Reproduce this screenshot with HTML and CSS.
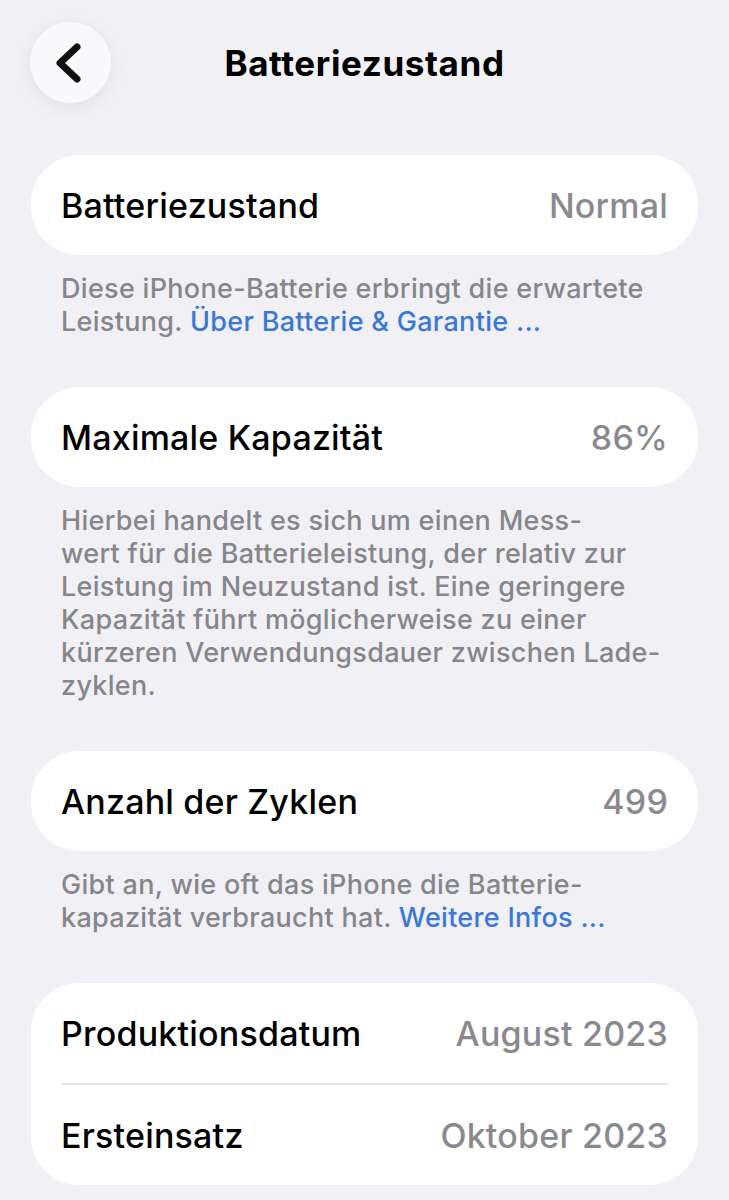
FILE: index.html
```html
<!DOCTYPE html>
<html lang="de">
<head>
  <meta charset="UTF-8">
  <title>Batteriezustand</title>
  <link rel="stylesheet" href="styles.css">
</head>
<body>
  <header class="nav">
    <button class="back" aria-label="Zurück">
      <svg width="40" height="40" viewBox="0 0 40 40">
        <path d="M27 4 L10 20 L27 36" fill="none" stroke="#111" stroke-width="7" stroke-linecap="round" stroke-linejoin="round"/>
      </svg>
    </button>
    <h1 class="title">Batteriezustand</h1>
  </header>

  <main class="content">
    <section class="group">
      <div class="card">
        <div class="row"><span class="label">Batteriezustand</span><span class="value">Normal</span></div>
      </div>
      <p class="footer">Diese iPhone-Batterie erbringt die erwartete<br>Leistung. <a href="#">Über Batterie &amp; Garantie ...</a></p>
    </section>

    <section class="group">
      <div class="card">
        <div class="row"><span class="label">Maximale Kapazität</span><span class="value">86%</span></div>
      </div>
      <p class="footer">Hierbei handelt es sich um einen Mess-<br>wert für die Batterieleistung, der relativ zur<br>Leistung im Neuzustand ist. Eine geringere<br>Kapazität führt möglicherweise zu einer<br>kürzeren Verwendungsdauer zwischen Lade-<br>zyklen.</p>
    </section>

    <section class="group">
      <div class="card">
        <div class="row"><span class="label">Anzahl der Zyklen</span><span class="value">499</span></div>
      </div>
      <p class="footer">Gibt an, wie oft das iPhone die Batterie-<br>kapazität verbraucht hat. <a href="#">Weitere Infos ...</a></p>
    </section>

    <section class="group">
      <div class="card">
        <div class="row"><span class="label">Produktionsdatum</span><span class="value">August 2023</span></div>
        <div class="row"><span class="label">Ersteinsatz</span><span class="value">Oktober 2023</span></div>
      </div>
    </section>
  </main>
</body>
</html>
```

FILE: styles.css
```css
body {
  margin: 0;
  background: #f0f0f5;
  font-family: Inter, "Noto Sans", sans-serif;
  color: #000;
}
.nav {
  position: relative;
  height: 103px;
  padding: 22px 0 0 30px;
  box-sizing: border-box;
}
.back {
  width: 81px;
  height: 81px;
  border: none;
  border-radius: 50%;
  background: #f9f9fb;
  box-shadow: 0 4px 18px rgba(0, 0, 0, 0.07);
  display: flex;
  align-items: center;
  justify-content: center;
  padding: 0 2px 0 0;
}
.title {
  position: absolute;
  left: 0;
  right: 0;
  top: 41px;
  margin: 0;
  text-align: center;
  font-size: 35px;
  font-weight: 700;
  line-height: 44px;
  letter-spacing: 0.6px;
}
.content {
  padding: 52px 31px 0;
}
.card {
  background: #fff;
  border-radius: 48px;
}
.row {
  height: 100px;
  display: flex;
  align-items: center;
  justify-content: space-between;
  padding: 0 30px;
  font-size: 34px;
  font-weight: 500;
  letter-spacing: 0.2px;
}
.row + .row {
  border-top: 2px solid #e4e4e8;
  margin: 0 30px;
  padding: 0;
  height: 100px;
}
.value {
  color: #8a8a8e;
}
.footer {
  margin: 0 0 49px;
  padding: 17px 30px 0;
  font-size: 27px;
  font-weight: 500;
  line-height: 33px;
  color: #86868b;
  letter-spacing: 0.3px;
}
.footer a {
  color: #3a78d8;
  text-decoration: none;
}
```
